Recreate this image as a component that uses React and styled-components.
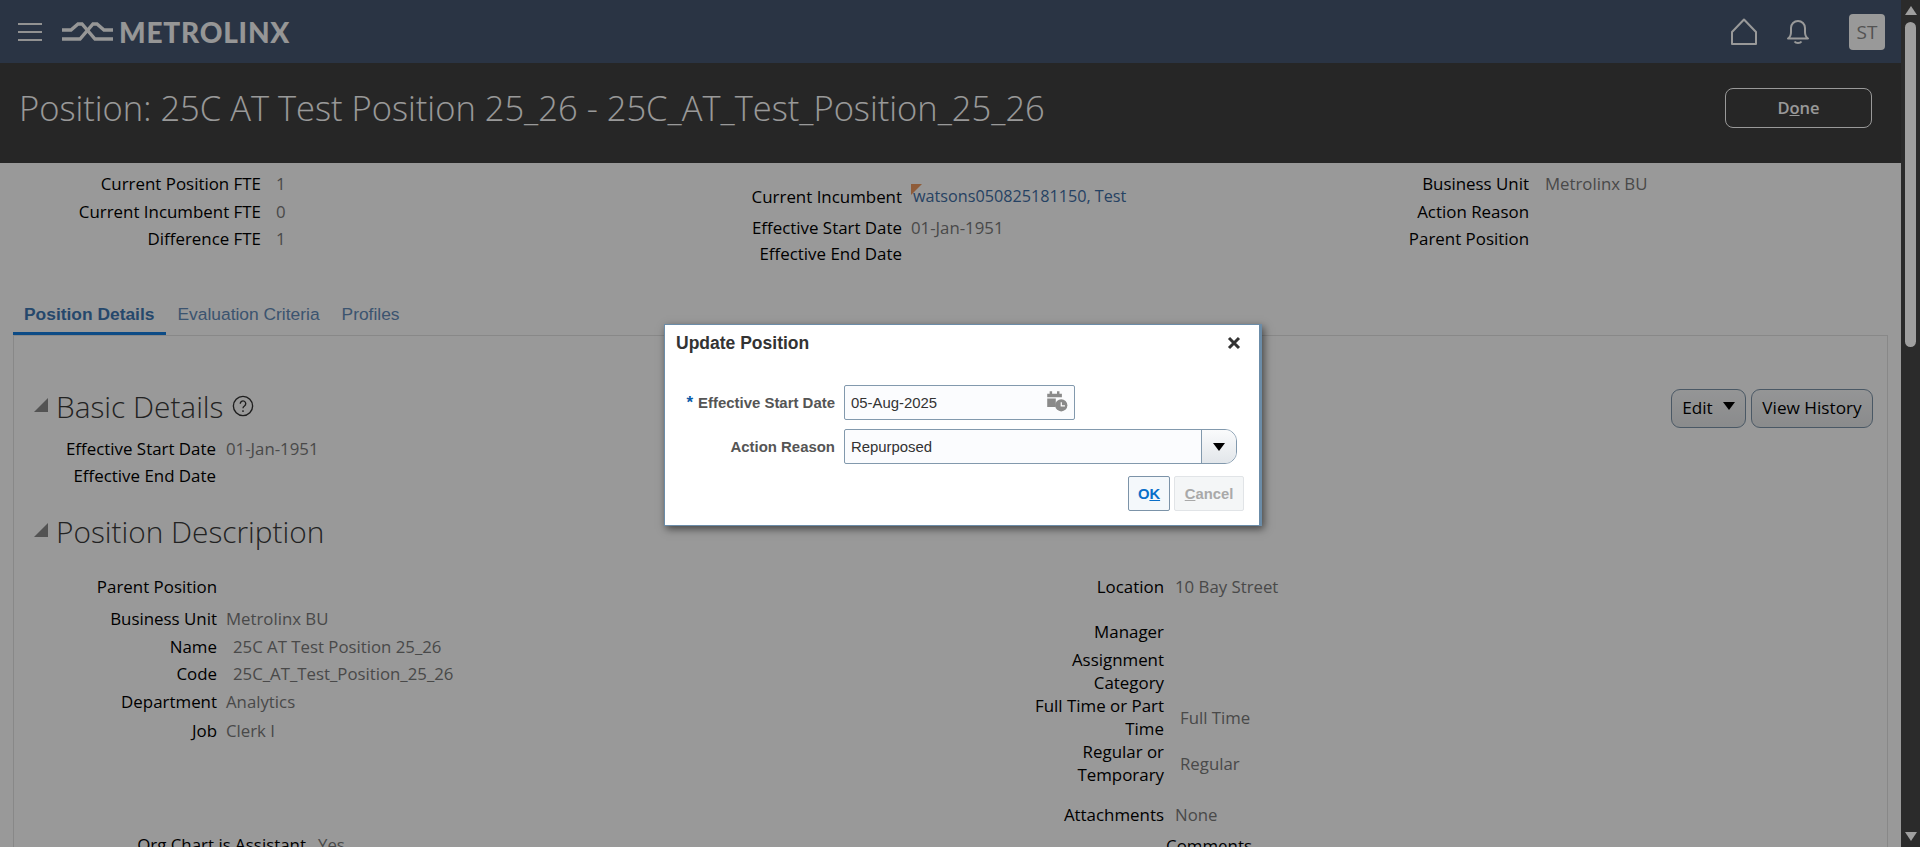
import React from "react";
import styled, { createGlobalStyle } from "styled-components";

const Global = createGlobalStyle`
  html, body { margin: 0; padding: 0; height: 100%; overflow: hidden; background: #fff; }
  * { box-sizing: border-box; }
`;
const UI = `"Open Sans", "Noto Sans", sans-serif`;
const AR = `"Liberation Sans", Arial, sans-serif`;

const Shell = styled.div`display: flex; width: 1920px; height: 847px; overflow: hidden;`;
const Main = styled.div`position: relative; width: 1901px; height: 847px; overflow: hidden; background: #fff; font-family: ${UI};`;
const Overlay = styled.div`position: absolute; inset: 0; background: rgba(0,0,0,.4);`;

const ScrollTrack = styled.aside`width: 19px; background: #2b2b2b; display: flex; flex-direction: column; align-items: center; padding-top: 6px;`;
const ScrollArrowUp = styled.div`width: 0; height: 0; border-left: 6px solid transparent; border-right: 6px solid transparent; border-bottom: 9px solid #9f9f9f;`;
const ScrollThumb = styled.div`width: 11px; height: 325px; margin-top: 7px; border-radius: 6px; background: #9f9f9f;`;
const ScrollSpacer = styled.div`flex: 1;`;
const ScrollArrowDown = styled.div`width: 0; height: 0; margin-bottom: 6px; border-left: 6px solid transparent; border-right: 6px solid transparent; border-top: 9px solid #9f9f9f;`;

const Nav = styled.header`height: 63px; background: #465872; display: flex; align-items: center; padding: 0 16px 0 18px;`;
const Burger = styled.div`width: 24px; display: flex; flex-direction: column; gap: 6px; margin-right: 20px;`;
const BurgerLine = styled.span`display: block; height: 2px; background: #f4f4f4;`;
const LogoText = styled.span`font-family: "Lato", sans-serif; font-weight: 900; font-size: 28px; letter-spacing: .8px; color: #fbfbfb; margin-left: 6px; line-height: 1;`;
const NavSpacer = styled.div`flex: 1;`;
const NavIcon = styled.svg`display: block; flex: none;`;
const Avatar = styled.div`width: 36px; height: 36px; border-radius: 4px; background: #fff; color: #8a8a8a; font-size: 19px; display: flex; align-items: center; justify-content: center; margin-left: 39px;`;

const TitleBar = styled.div`height: 100px; background: #404040; display: flex; align-items: center; justify-content: space-between; padding: 0 29px 10px 19px;`;
const Title = styled.h1`margin: 0; font-weight: 300; font-size: 34.5px; color: #fff; white-space: nowrap; line-height: 1.2;`;
const DoneButton = styled.button`width: 147px; height: 40px; border: 1px solid #fff; border-radius: 8px; background: transparent; color: #fff; font-family: ${UI}; font-weight: 600; font-size: 16.5px; padding: 0 0 2px;`;
const Und = styled.span`text-decoration: underline;`;

const Summary = styled.section`display: grid; grid-template-columns: 627px 641px 1fr; height: 135px;`;
const SummaryCol = styled.div`padding-top: ${p => p.$top}px;`;
const Row = styled.div`display: flex; align-items: center; height: ${p => p.$h || 28}px; margin-top: ${p => p.$mt || 0}px;`;
const Label = styled.div`width: ${p => p.$w}px; flex: none; text-align: right; color: #000; font-size: 16.9px; line-height: 23px;`;
const Value = styled.div`margin-left: ${p => p.$ml || 9}px; color: #7a7a7a; font-size: 16.8px; white-space: nowrap;`;
const LinkValue = styled.a`position: relative; margin-left: 11px; color: #3f6ea5; font-size: 16.2px; white-space: nowrap;`;
const Corner = styled.i`position: absolute; left: -2px; top: -1px; width: 0; height: 0; border-top: 11px solid #ee9a5f; border-right: 11px solid transparent;`;

const Tabs = styled.nav`display: flex; height: 37px; margin: 0 13px; font-family: ${AR}; font-size: 17.4px;`;
const Tab = styled.div`padding: 6px ${p => p.$active ? 12 : 11}px 0 11px; color: ${p => p.$active ? "#3f78b5" : "#648cba"}; font-weight: ${p => p.$active ? 700 : 400}; border-bottom: ${p => p.$active ? "3px solid #157ee0" : "0"};`;
const Panel = styled.section`margin: 0 13px; width: 1875px; height: 600px; border: 1px solid #e3e3e3; border-width: 1px 1px 0 1px; padding: 0 0 0 20px;`;
const SectionHead = styled.div`display: flex; align-items: center; height: 44px; margin-top: ${p => p.$mt}px;`;
const Tri = styled.span`width: 0; height: 0; border-left: 14px solid transparent; border-bottom: 14px solid #8a8a8a; margin-right: 8px; margin-top: -6px;`;
const H2 = styled.h2`margin: 0; font-weight: 300; font-size: 29.8px; color: #3a3a3a; white-space: nowrap; position: relative; top: -2px;`;
const Help = styled.svg`margin-left: 8px; margin-top: -4px;`;
const Actions = styled.div`margin-left: auto; margin-right: 14px; display: flex; gap: 5px;`;
const PillButton = styled.button`height: 39px; width: ${p => p.$w}px; border: 1px solid #7c93a8; border-radius: 9px; background: linear-gradient(#f8f9fa, #e6e8ea); color: #000; font-family: ${UI}; font-size: 17.2px; padding: 0 0 1px; display: flex; align-items: center; justify-content: center; gap: 10px;`;
const SmallTri = styled.span`width: 0; height: 0; border-left: 6px solid transparent; border-right: 6px solid transparent; border-top: 8px solid #000; margin-top: -4px;`;
const FormGrid = styled.div`display: grid; grid-template-columns: 1013px 1fr; margin-left: -20px; margin-top: 17px;`;
const BasicRows = styled.div`margin-left: -20px; margin-top: 4px;`;

const Dialog = styled.div`position: absolute; left: 664px; top: 324px; width: 598px; height: 202px; background: #fff; border: 1px solid #6b8ca8; border-right-width: 3px; box-shadow: 2px 3px 8px rgba(0,0,0,.55); font-family: ${AR}; padding: 0 0 0 11px;`;
const DialogHead = styled.div`display: flex; justify-content: space-between; align-items: center; height: 36px; padding-right: 18px;`;
const DialogTitle = styled.div`font-weight: 700; font-size: 17.5px; color: #333;`;
const Close = styled.svg`display: block;`;
const DField = styled.div`display: flex; align-items: center; height: ${p => p.$h}px; margin-top: ${p => p.$mt}px;`;
const DLabel = styled.label`width: 159px; text-align: right; font-weight: 700; font-size: 14.95px; color: #555; white-space: nowrap; flex: none;`;
const Req = styled.span`color: #0a5aa8; font-size: 17px; margin-right: 5px;`;
const Input = styled.div`display: flex; align-items: center; justify-content: space-between; width: ${p => p.$w}px; height: 100%; margin-left: 9px; padding: 0 6px 0 6px; background: #fbfcfe; border: 1px solid #8299ad; border-radius: 2px; font-size: 14.9px; color: #333;`;
const SelectBox = styled.div`display: flex; align-items: stretch; width: 393px; height: 100%; margin-left: 9px; background: #fbfcfe; border: 1px solid #8299ad; border-radius: 2px 12px 12px 2px; overflow: hidden; font-size: 14.9px; color: #333;`;
const SelectText = styled.div`flex: 1; display: flex; align-items: center; padding-left: 6px;`;
const SelectArrow = styled.div`width: 35px; border-left: 1px solid #8299ad; background: linear-gradient(#fafbfc, #e2e6ea); display: flex; align-items: center; justify-content: center;`;
const Footer = styled.div`display: flex; justify-content: flex-end; gap: 4px; margin-top: 12px; padding-right: 15px;`;
const OkButton = styled.button`width: 42px; height: 35px; padding: 0; background: #f4f8fb; border: 1px solid #7c93a8; border-radius: 2px; color: #0a6fc9; font-weight: 700; font-size: 14.8px; font-family: ${AR};`;
const CancelButton = styled.button`width: 70px; height: 35px; padding: 0; background: #f4f6f7; border: 1px solid #e1e4e7; border-radius: 2px; color: #a9a9a9; font-weight: 700; font-size: 14.8px; font-family: ${AR};`;

const Logo = () => (
  <svg width="51" height="20" viewBox="0 0 51 20" fill="none" stroke="#fbfbfb" strokeWidth="3.4">
    <path d="M0 8H9L16 2H20L33 17H51" />
    <path d="M51 8H42L35 2H31L18 17H0" />
  </svg>
);
const Home = () => (
  <NavIcon width="26" height="27" viewBox="0 0 26 27" fill="none" stroke="#fff" strokeWidth="2">
    <path d="M1 14 13 1.5 25 14V26H1Z" strokeLinejoin="round" />
  </NavIcon>
);
const Bell = () => (
  <NavIcon width="24" height="26" viewBox="0 0 24 26" fill="none" stroke="#fff" strokeWidth="2" style={{ marginLeft: 29 }}>
    <path d="M2 19.5c2.5-1.5 3-3.5 3-6.5V9a7 7 0 0 1 14 0v4c0 3 .5 5 3 6.5Z" strokeLinejoin="round" />
    <path d="M8.5 22.5c1.5 2 5.5 2 7 0" />
  </NavIcon>
);

const F = ({ w, label, value, h, mt, ml }) => (
  <Row $h={h} $mt={mt}>
    <Label $w={w}>{label}</Label>
    {value && <Value $ml={ml}>{value}</Value>}
  </Row>
);

export default function App() {
  return (
    <Shell>
      <Global />
      <Main>
        <Nav>
          <Burger><BurgerLine /><BurgerLine /><BurgerLine /></Burger>
          <Logo />
          <LogoText>METROLINX</LogoText>
          <NavSpacer />
          <Home />
          <Bell />
          <Avatar>ST</Avatar>
        </Nav>
        <TitleBar>
          <Title>Position: 25C AT Test Position 25_26 - 25C_AT_Test_Position_25_26</Title>
          <DoneButton>D<Und>o</Und>ne</DoneButton>
        </TitleBar>
        <Summary>
          <SummaryCol $top={6}>
            <F w={261} label="Current Position FTE" value="1" ml={15} />
            <F w={261} label="Current Incumbent FTE" value="0" ml={15} />
            <F w={261} label="Difference FTE" value="1" ml={15} mt={-1} />
          </SummaryCol>
          <SummaryCol $top={19}>
            <Row>
              <Label $w={275}>Current Incumbent</Label>
              <LinkValue><Corner />watsons050825181150, Test</LinkValue>
            </Row>
            <F w={275} label="Effective Start Date" value="01-Jan-1951" mt={3} />
            <F w={275} label="Effective End Date" mt={-2} />
          </SummaryCol>
          <SummaryCol $top={6}>
            <F w={261} label="Business Unit" value="Metrolinx BU" ml={16} />
            <F w={261} label="Action Reason" />
            <F w={261} label="Parent Position" mt={-1} />
          </SummaryCol>
        </Summary>
        <Tabs>
          <Tab $active>Position Details</Tab>
          <Tab>Evaluation Criteria</Tab>
          <Tab>Profiles</Tab>
        </Tabs>
        <Panel>
          <SectionHead $mt={50}>
            <Tri />
            <H2>Basic Details</H2>
            <Help width="22" height="22" viewBox="0 0 24 24" fill="none" stroke="#333" strokeWidth="1.5">
              <circle cx="12" cy="12" r="10.5" />
              <path d="M9 9.5a3 3 0 1 1 4.6 2.5c-1 .7-1.6 1.2-1.6 2.5M12 16.5v2" />
            </Help>
            <Actions>
              <PillButton $w={75}>Edit <SmallTri /></PillButton>
              <PillButton $w={122}>View History</PillButton>
            </Actions>
          </SectionHead>
          <BasicRows>
            <F w={202} label="Effective Start Date" value="01-Jan-1951" ml={10} />
            <F w={202} label="Effective End Date" mt={-1} />
          </BasicRows>
          <SectionHead $mt={22}>
            <Tri />
            <H2>Position Description</H2>
          </SectionHead>
          <FormGrid>
            <div>
              <F w={203} label="Parent Position" />
              <F w={203} label="Business Unit" value="Metrolinx BU" mt={4} />
              <F w={203} label="Name" value="25C AT Test Position 25_26" ml={16} />
              <F w={203} label="Code" value="25C_AT_Test_Position_25_26" ml={16} mt={-1} />
              <F w={203} label="Department" value="Analytics" />
              <F w={203} label="Job" value="Clerk I" mt={1} />
              <F w={292} label="Org Chart is Assistant" value="Yes" ml={12} mt={86} />
            </div>
            <div>
              <F w={137} label="Location" value="10 Bay Street" ml={11} />
              <F w={137} label="Manager" mt={17} />
              <F w={137} label="Assignment Category" h={46} mt={3} />
              <F w={137} label="Full Time or Part Time" value="Full Time" ml={16} h={46} />
              <F w={137} label="Regular or Temporary" value="Regular" ml={16} h={46} />
              <F w={137} label="Attachments" value="None" ml={11} mt={14} />
              <F w={225} label="Comments" mt={3} />
            </div>
          </FormGrid>
        </Panel>
        <Overlay />
        <Dialog>
          <DialogHead>
            <DialogTitle>Update Position</DialogTitle>
            <Close width="14" height="14" viewBox="0 0 14 14" stroke="#333" strokeWidth="3" fill="none">
              <path d="M2 2 12 12M12 2 2 12" />
            </Close>
          </DialogHead>
          <DField $h={35} $mt={24}>
            <DLabel><Req>*</Req>Effective Start Date</DLabel>
            <Input $w={231}>05-Aug-2025
              <svg width="22" height="22" viewBox="0 0 18 18" fill="#8a8a8a" style={{ marginTop: -3 }}>
                <path d="M1 3h2V1h2v2h4V1h2v2h2v3H1ZM1 7h7v7H1Z" />
                <circle cx="12.5" cy="12.5" r="5" />
                <path d="M12.5 10v3h3" stroke="#fff" fill="none" strokeWidth="1" />
              </svg>
            </Input>
          </DField>
          <DField $h={35} $mt={9}>
            <DLabel>Action Reason</DLabel>
            <SelectBox>
              <SelectText>Repurposed</SelectText>
              <SelectArrow><SmallTri style={{ marginTop: 1 }} /></SelectArrow>
            </SelectBox>
          </DField>
          <Footer>
            <OkButton>O<Und>K</Und></OkButton>
            <CancelButton><Und>C</Und>ancel</CancelButton>
          </Footer>
        </Dialog>
      </Main>
      <ScrollTrack>
        <ScrollArrowUp />
        <ScrollThumb />
        <ScrollSpacer />
        <ScrollArrowDown />
      </ScrollTrack>
    </Shell>
  );
}
